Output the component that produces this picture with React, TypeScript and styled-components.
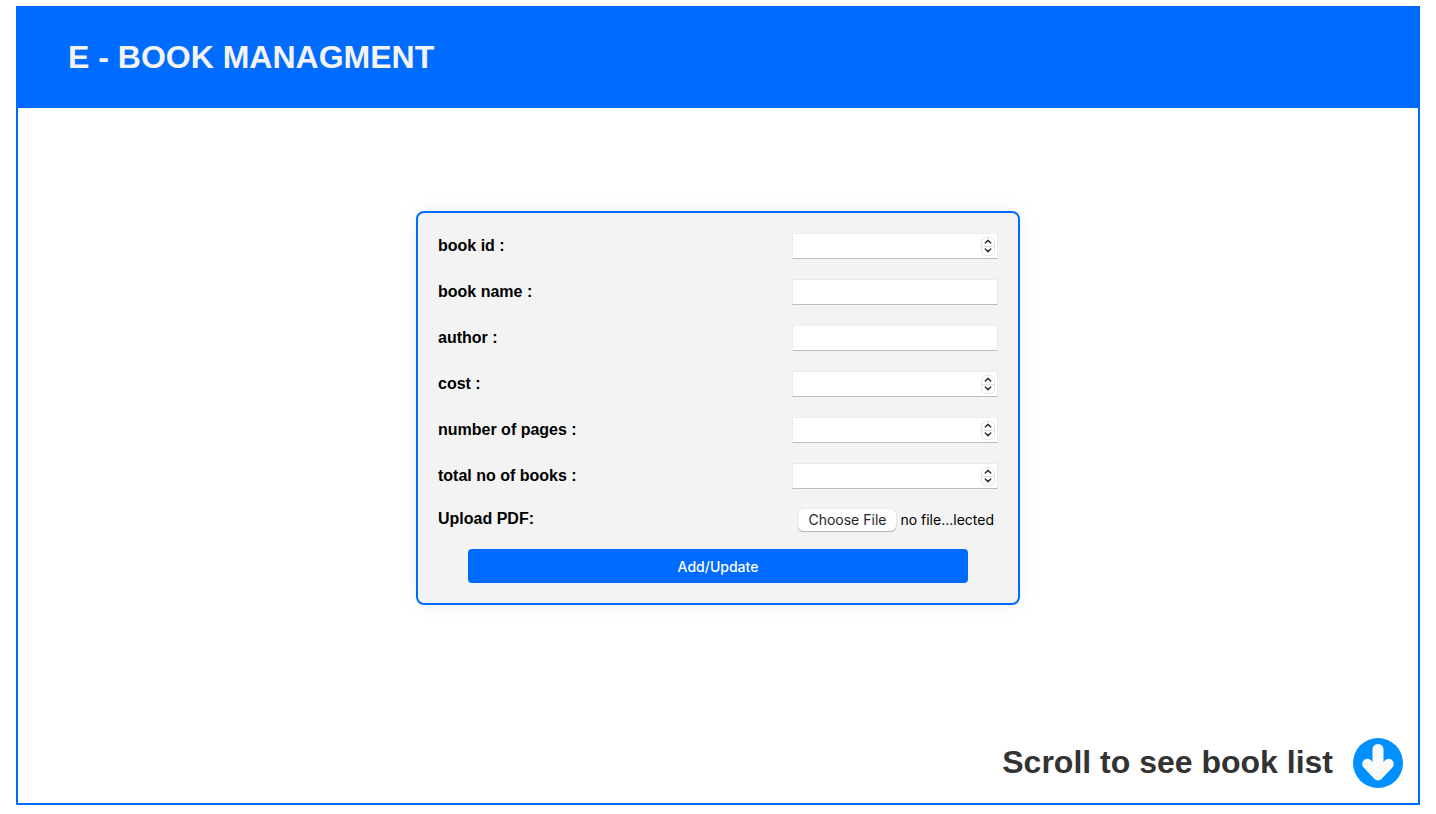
import React, { useRef, useState } from "react";
import styled, { createGlobalStyle } from "styled-components";

const GlobalStyle = createGlobalStyle`
  * { box-sizing: border-box; }
  body {
    margin: 0;
    background: #fff;
    font-family: "Liberation Sans", Arial, sans-serif;
  }
`;

const blue = "#006bff";
const uiFont = `Inter, "Liberation Sans", sans-serif`;

const Page = styled.div`
  min-height: 100vh;
  padding: 6px 16px 9px;
  display: flex;
`;

const Frame = styled.div`
  flex: 1;
  display: flex;
  flex-direction: column;
  border: 2px solid ${blue};
`;

const Header = styled.header`
  display: flex;
  align-items: center;
  height: 100px;
  padding: 0 50px;
  background: ${blue};
`;

const Title = styled.h1`
  margin: 0;
  font-size: 32px;
  line-height: 36px;
  padding-bottom: 2px;
  color: #f3f3f3;
`;

const Main = styled.main`
  flex: 1;
  display: flex;
  align-items: center;
  justify-content: center;
`;

const Card = styled.form`
  width: 100%;
  max-width: 604px;
  padding: 20px;
  display: flex;
  flex-direction: column;
  gap: 20px;
  background: #f3f3f3;
  border: 2px solid ${blue};
  border-radius: 8px;
  box-shadow: 0 0 20px rgba(0, 0, 0, 0.06);
`;

const Row = styled.div`
  display: flex;
  align-items: center;
  justify-content: space-between;
`;

const UploadRow = styled(Row)`
  align-items: flex-start;
  height: 20px;
`;

const Label = styled.label`
  font-size: 16px;
  line-height: 20px;
  font-weight: bold;
  color: #000;
`;

const Field = styled.div`
  display: flex;
  align-items: center;
  width: 206px;
  height: 26px;
  padding-right: 3px;
  background: #fff;
  border: 1px solid #ebebeb;
  border-bottom-color: #bdbdbd;
`;

const Input = styled.input`
  flex: 1;
  min-width: 0;
  height: 24px;
  padding: 0 4px;
  border: 0;
  outline: 0;
  background: transparent;
  font-family: ${uiFont};
  font-size: 14px;
  appearance: textfield;
  &::-webkit-inner-spin-button { appearance: none; margin: 0; }
`;

const Stepper = styled.div`
  display: flex;
  flex-direction: column;
  width: 12px;
  height: 17px;
  border-radius: 5px;
  overflow: hidden;
  box-shadow: 0 0 1px 1px rgba(0, 0, 0, 0.12);
`;

const StepButton = styled.button`
  flex: 1;
  display: flex;
  align-items: center;
  justify-content: center;
  padding: 0;
  border: 0;
  background: #fff;
  color: #333;
  & + & { border-top: 1px solid #dedede; }
`;

const FilePicker = styled.div`
  position: relative;
  display: flex;
  align-items: flex-start;
  gap: 4px;
  padding-right: 4px;
  font-family: ${uiFont};
  font-size: 14px;
  line-height: 22px;
  color: #000;
`;

const FileButton = styled.span`
  height: 22px;
  padding: 0 10px;
  border-radius: 5px;
  background: #fff;
  color: #262626;
  box-shadow: 0 0 1px rgba(0, 0, 0, 0.3), 0 1px 1px rgba(0, 0, 0, 0.25);
`;

const FileInput = styled.input`
  position: absolute;
  inset: 0;
  width: 100%;
  opacity: 0;
  cursor: pointer;
`;

const Submit = styled.button`
  height: 34px;
  margin: 0 30px;
  border: 0;
  border-radius: 4px;
  background: ${blue};
  color: #fff;
  font-family: ${uiFont};
  font-size: 14px;
  font-weight: 500;
  cursor: pointer;
`;

const Footer = styled.footer`
  display: flex;
  align-items: center;
  justify-content: flex-end;
  gap: 20px;
  padding: 30px 15px 15px;
`;

const Hint = styled.h2`
  margin: 0;
  font-size: 32px;
  line-height: 36px;
  padding-bottom: 2px;
  color: #333;
`;

const ScrollLink = styled.a`
  display: block;
  width: 50px;
  height: 50px;
`;

function NumberField({ id }: { id: string }) {
  const ref = useRef<HTMLInputElement>(null);
  return (
    <Field>
      <Input id={id} type="number" ref={ref} />
      <Stepper>
        <StepButton type="button" aria-label="Increase" onClick={() => ref.current?.stepUp()}>
          <svg width="8" height="5" viewBox="0 0 8 5" fill="none" stroke="currentColor" strokeWidth="1.5">
            <path d="M1.300 4 4 1.400 6.700 4" strokeLinecap="round" strokeLinejoin="round" />
          </svg>
        </StepButton>
        <StepButton type="button" aria-label="Decrease" onClick={() => ref.current?.stepDown()}>
          <svg width="8" height="5" viewBox="0 0 8 5" fill="none" stroke="currentColor" strokeWidth="1.5">
            <path d="M1.300 1 4 3.600 6.700 1" strokeLinecap="round" strokeLinejoin="round" />
          </svg>
        </StepButton>
      </Stepper>
    </Field>
  );
}

const fields = [
  { id: "book-id", label: "book id :", numeric: true },
  { id: "book-name", label: "book name :", numeric: false },
  { id: "author", label: "author :", numeric: false },
  { id: "cost", label: "cost :", numeric: true },
  { id: "pages", label: "number of pages :", numeric: true },
  { id: "total", label: "total no of books :", numeric: true },
];

export default function App() {
  const [fileName, setFileName] = useState("no file...lected");
  return (
    <Page>
      <GlobalStyle />
      <Frame>
        <Header>
          <Title>E - BOOK MANAGMENT</Title>
        </Header>
        <Main>
          <Card onSubmit={(e) => e.preventDefault()}>
            {fields.map((f) => (
              <Row key={f.id}>
                <Label htmlFor={f.id}>{f.label}</Label>
                {f.numeric ? (
                  <NumberField id={f.id} />
                ) : (
                  <Field>
                    <Input id={f.id} type="text" />
                  </Field>
                )}
              </Row>
            ))}
            <UploadRow>
              <Label htmlFor="pdf">Upload PDF:</Label>
              <FilePicker>
                <FileButton>Choose File</FileButton>
                <span>{fileName}</span>
                <FileInput
                  id="pdf"
                  type="file"
                  accept="application/pdf"
                  onChange={(e) => setFileName(e.target.files?.[0]?.name ?? "no file...lected")}
                />
              </FilePicker>
            </UploadRow>
            <Submit type="submit">Add/Update</Submit>
          </Card>
        </Main>
        <Footer>
          <Hint>Scroll to see book list</Hint>
          <ScrollLink href="#book-list" aria-label="Go to book list">
            <svg width="50" height="50" viewBox="0 0 50 50">
              <circle cx="25" cy="25" r="25" fill="#0090ff" />
              <g fill="none" stroke="#fafafa" strokeLinecap="round" strokeLinejoin="round">
                <path d="M25 11.500V35" strokeWidth="11" />
                <path d="M14.400 26 25 37.200 35.600 26" strokeWidth="10.400" />
              </g>
              <path d="M14.400 26H35.600L25 37Z" fill="#fafafa" />
            </svg>
          </ScrollLink>
        </Footer>
      </Frame>
    </Page>
  );
}
